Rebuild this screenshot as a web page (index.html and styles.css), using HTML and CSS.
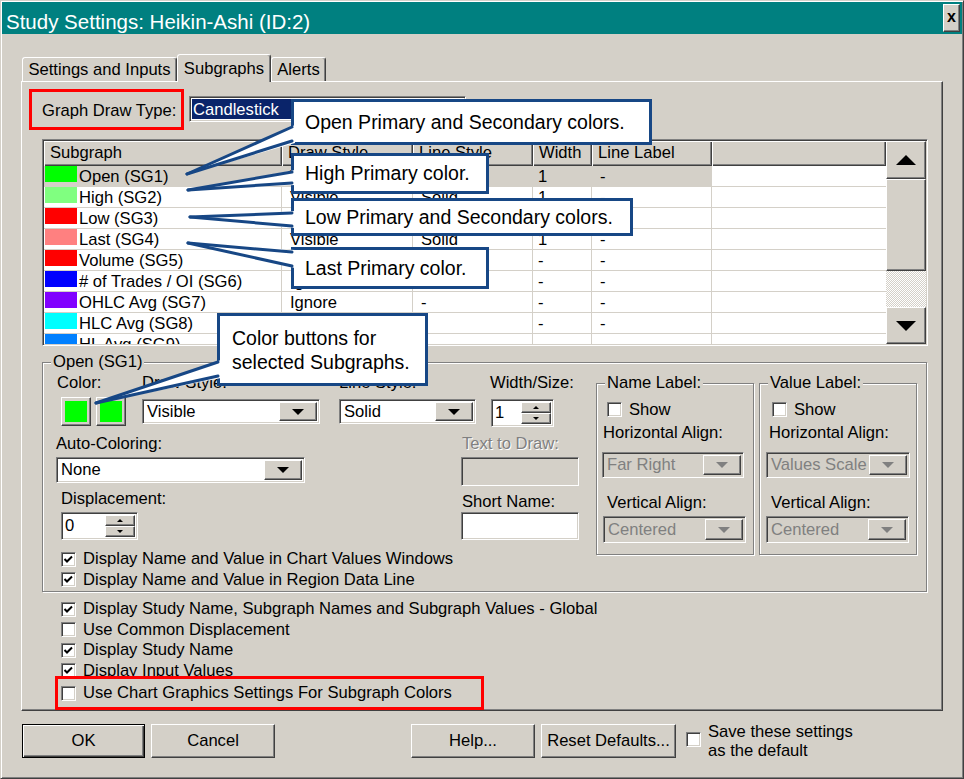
FILE: index.html
```html
<!DOCTYPE html>
<html>
<head>
<meta charset="utf-8">
<title>Study Settings</title>
<link rel="stylesheet" href="styles.css">
</head>
<body>
<div class="window">
  <div class="titlebar">
    <span class="title">Study Settings: Heikin-Ashi (ID:2)</span>
    <span class="close raised">x</span>
  </div>

  <div class="tabs">
    <div class="tab t1">Settings and Inputs</div>
    <div class="tab t2">Subgraphs</div>
    <div class="tab t3">Alerts</div>
  </div>

  <div class="panel">
    <div class="drawtype">
      <div class="gdt">Graph Draw Type:</div>
      <div class="combo sunken gdt-combo"><span class="hl">Candlestick</span><span class="dd raised"><i class="arr"></i></span></div>
    </div>

    <div class="grid sunken">
      <div class="gmain">
        <div class="ghead">
          <div class="hc c1">Subgraph</div>
          <div class="hc c2">Draw Style</div>
          <div class="hc c3">Line Style</div>
          <div class="hc c4">Width</div>
          <div class="hc c5">Line Label</div>
          <div class="hc c6"></div>
        </div>
        <div class="grow sel"><div class="gc c1"><span class="sw sw1"></span>Open (SG1)</div><div class="gc c2">Visible</div><div class="gc c3">Solid</div><div class="gc c4">1</div><div class="gc c5">-</div><div class="gc c6"></div></div>
        <div class="grow"><div class="gc c1"><span class="sw sw2"></span>High (SG2)</div><div class="gc c2">Visible</div><div class="gc c3">Solid</div><div class="gc c4">1</div><div class="gc c5">-</div><div class="gc c6"></div></div>
        <div class="grow"><div class="gc c1"><span class="sw sw3"></span>Low (SG3)</div><div class="gc c2">Visible</div><div class="gc c3">Solid</div><div class="gc c4">1</div><div class="gc c5">-</div><div class="gc c6"></div></div>
        <div class="grow"><div class="gc c1"><span class="sw sw4"></span>Last (SG4)</div><div class="gc c2">Visible</div><div class="gc c3">Solid</div><div class="gc c4">1</div><div class="gc c5">-</div><div class="gc c6"></div></div>
        <div class="grow"><div class="gc c1"><span class="sw sw5"></span>Volume (SG5)</div><div class="gc c2">Ignore</div><div class="gc c3">-</div><div class="gc c4">-</div><div class="gc c5">-</div><div class="gc c6"></div></div>
        <div class="grow"><div class="gc c1"><span class="sw sw6"></span># of Trades / OI (SG6)</div><div class="gc c2">Ignore</div><div class="gc c3">-</div><div class="gc c4">-</div><div class="gc c5">-</div><div class="gc c6"></div></div>
        <div class="grow"><div class="gc c1"><span class="sw sw7"></span>OHLC Avg (SG7)</div><div class="gc c2">Ignore</div><div class="gc c3">-</div><div class="gc c4">-</div><div class="gc c5">-</div><div class="gc c6"></div></div>
        <div class="grow"><div class="gc c1"><span class="sw sw8"></span>HLC Avg (SG8)</div><div class="gc c2">Ignore</div><div class="gc c3">-</div><div class="gc c4">-</div><div class="gc c5">-</div><div class="gc c6"></div></div>
        <div class="grow"><div class="gc c1"><span class="sw sw9"></span>HL Avg (SG9)</div><div class="gc c2">Ignore</div><div class="gc c3">-</div><div class="gc c4">-</div><div class="gc c5">-</div><div class="gc c6"></div></div>
      </div>
      <div class="vscroll">
        <div class="sb-btn sb-up raised"><i class="sarr-up"></i></div>
        <div class="sb-thumb raised"></div>
        <div class="sb-track"></div>
        <div class="sb-btn sb-down raised"><i class="sarr-dn"></i></div>
      </div>
    </div>

    <div class="ogroup">
      <span class="legend">Open (SG1)</span>
      <div class="ocol">
        <div class="rowA">
          <span>Color:</span>
          <span>Draw Style:</span>
          <span>Line Style:</span>
          <span>Width/Size:</span>
        </div>
        <div class="rowB">
          <div class="cbtns">
            <span class="cbtn raised"><span class="cfill"></span></span>
            <span class="cbtn raised"><span class="cfill"></span></span>
          </div>
          <div class="combo sunken w-draw"><span class="val">Visible</span><span class="dd raised"><i class="arr"></i></span></div>
          <div class="combo sunken w-line"><span class="val">Solid</span><span class="dd raised"><i class="arr"></i></span></div>
          <div class="spin sunken w-width"><span class="val">1</span><span class="sbtns"><span class="sb raised"><i class="tup"></i></span><span class="sb raised"><i class="tdn"></i></span></span></div>
        </div>
        <div class="rowC">
          <span>Auto-Coloring:</span>
          <span class="disabled ml1">Text to Draw:</span>
        </div>
        <div class="rowD">
          <div class="combo sunken w-auto"><span class="val">None</span><span class="dd raised"><i class="arr"></i></span></div>
          <div class="edit sunken dis-edit"></div>
        </div>
        <div class="rowE">
          <span class="ml5">Displacement:</span>
          <span class="ml1 mt3">Short Name:</span>
        </div>
        <div class="rowF">
          <div class="spin sunken w-disp"><span class="val">0</span><span class="sbtns"><span class="sb raised"><i class="tup"></i></span><span class="sb raised"><i class="tdn"></i></span></span></div>
          <div class="edit sunken w-short"></div>
        </div>
        <div class="ochecks">
          <div class="chk-row"><span class="chk sunken"><svg viewBox="0 0 13 13" width="13" height="13"><path d="M2.5 6 L5 8.5 L10 3.5" fill="none" stroke="#000" stroke-width="2"/></svg></span><span class="lbl">Display Name and Value in Chart Values Windows</span></div>
          <div class="chk-row"><span class="chk sunken"><svg viewBox="0 0 13 13" width="13" height="13"><path d="M2.5 6 L5 8.5 L10 3.5" fill="none" stroke="#000" stroke-width="2"/></svg></span><span class="lbl">Display Name and Value in Region Data Line</span></div>
        </div>
      </div>

      <div class="lgroup lg-name">
        <span class="legend">Name Label:</span>
        <div class="show-row"><span class="chk sunken"></span><span class="lbl">Show</span></div>
        <div class="lg-label lh">Horizontal Align:</div>
        <div class="combo sunken lg-combo disabled-combo"><span class="val">Far Right</span><span class="dd raised"><i class="arr dis"></i></span></div>
        <div class="lg-label lv">Vertical Align:</div>
        <div class="combo sunken lg-combo lg-combo2 disabled-combo"><span class="val">Centered</span><span class="dd raised"><i class="arr dis"></i></span></div>
      </div>

      <div class="lgroup lg-value">
        <span class="legend">Value Label:</span>
        <div class="show-row"><span class="chk sunken"></span><span class="lbl">Show</span></div>
        <div class="lg-label lh">Horizontal Align:</div>
        <div class="combo sunken lg-combo disabled-combo"><span class="val">Values Scale</span><span class="dd raised"><i class="arr dis"></i></span></div>
        <div class="lg-label lv">Vertical Align:</div>
        <div class="combo sunken lg-combo lg-combo2 disabled-combo"><span class="val">Centered</span><span class="dd raised"><i class="arr dis"></i></span></div>
      </div>
    </div>

    <div class="gchecks">
      <div class="chk-row"><span class="chk sunken"><svg viewBox="0 0 13 13" width="13" height="13"><path d="M2.5 6 L5 8.5 L10 3.5" fill="none" stroke="#000" stroke-width="2"/></svg></span><span class="lbl">Display Study Name, Subgraph Names and Subgraph Values - Global</span></div>
      <div class="chk-row"><span class="chk sunken"></span><span class="lbl">Use Common Displacement</span></div>
      <div class="chk-row"><span class="chk sunken"><svg viewBox="0 0 13 13" width="13" height="13"><path d="M2.5 6 L5 8.5 L10 3.5" fill="none" stroke="#000" stroke-width="2"/></svg></span><span class="lbl">Display Study Name</span></div>
      <div class="chk-row"><span class="chk sunken"><svg viewBox="0 0 13 13" width="13" height="13"><path d="M2.5 6 L5 8.5 L10 3.5" fill="none" stroke="#000" stroke-width="2"/></svg></span><span class="lbl">Display Input Values</span></div>
    </div>
    <div class="redrow">
      <span class="chk sunken"></span><span class="lbl">Use Chart Graphics Settings For Subgraph Colors</span>
    </div>
  </div>

  <div class="btnrow">
    <div class="btn ok">OK</div>
    <div class="btn raised cancel">Cancel</div>
    <div class="btn raised help">Help...</div>
    <div class="btn raised reset">Reset Defaults...</div>
    <span class="chk sunken save-chk"></span>
    <span class="save-lbl">Save these settings<br>as the default</span>
  </div>
</div>

<div class="callouts">
  <div class="co co1">Open Primary and Secondary colors.</div>
  <div class="co co2">High Primary color.</div>
  <div class="co co3">Low Primary and Secondary colors.</div>
  <div class="co co4">Last Primary color.</div>
  <div class="co co5">Color buttons for<br>selected Subgraphs.</div>
  <svg class="wedges" width="964" height="779" viewBox="0 0 964 779">
    <g fill="#fff" stroke="none">
      <polygon points="187,174 295,125 295,143"/>
      <polygon points="188,190 295,170 295,185"/>
      <polygon points="190,217 295,211 295,228"/>
      <polygon points="188,243 295,250 295,268"/>
      <polygon points="96,403 221,360 221,378"/>
    </g>
    <g stroke="#174785" stroke-width="3" fill="none" stroke-linecap="round">
      <line x1="187" y1="174" x2="292" y2="127"/>
      <line x1="187" y1="174" x2="292" y2="141"/>
      <line x1="188" y1="190" x2="292" y2="172"/>
      <line x1="188" y1="190" x2="292" y2="183"/>
      <line x1="190" y1="217" x2="292" y2="213"/>
      <line x1="190" y1="217" x2="292" y2="226"/>
      <line x1="188" y1="243" x2="292" y2="252"/>
      <line x1="188" y1="243" x2="292" y2="266"/>
      <line x1="96" y1="403" x2="218" y2="362"/>
      <line x1="96" y1="403" x2="218" y2="376"/>
    </g>
  </svg>
</div>
</body>
</html>
```

FILE: styles.css
```css
* { box-sizing: border-box; margin: 0; padding: 0; }
html, body { width: 964px; height: 779px; overflow: hidden; }
body {
  position: relative;
  background: #d4d0c8;
  font-family: "Liberation Sans", Arial, sans-serif;
  font-size: 16.6px;
  color: #000;
}

/* 3D helpers */
.raised {
  background: #d4d0c8;
  border: 1px solid;
  border-color: #fff #404040 #404040 #fff;
  box-shadow: inset -1px -1px #808080;
}
.sunken {
  background: #fff;
  border: 1px solid;
  border-color: #808080 #fff #fff #808080;
  box-shadow: inset 1px 1px #404040, inset -1px -1px #d4d0c8;
}

/* window */
.window {
  width: 964px;
  height: 779px;
  border: 1px solid;
  border-color: #d4d0c8 #404040 #404040 #d4d0c8;
  padding: 1px;
  background: #d4d0c8;
  box-shadow: inset 1px 1px #fff, inset -1px -1px #808080;
}
.titlebar {
  height: 32px;
  background: #008080;
  display: flex;
  justify-content: space-between;
  align-items: flex-start;
}
.title {
  color: #fff;
  font-size: 20.5px;
  line-height: 24px;
  margin: 8px 0 0 4px;
  white-space: nowrap;
}
.close {
  width: 17px;
  height: 28px;
  margin: 2px 2px 0 0;
  display: flex;
  align-items: center;
  justify-content: center;
  font-weight: bold;
  font-size: 16px;
  line-height: 16px;
  padding-bottom: 2px;
}

/* tabs */
.tabs {
  display: flex;
  align-items: flex-end;
  height: 28px;
  margin: 19px 0 0 20px;
}
.tab {
  height: 24px;
  display: flex;
  align-items: center;
  justify-content: center;
  background: #d4d0c8;
  border: 1px solid;
  border-bottom: none;
  border-color: #fff #404040 transparent #fff;
  box-shadow: inset -1px 0 #808080;
  border-radius: 3px 3px 0 0;
  white-space: nowrap;
  padding-top: 1px;
}
.t1 { width: 155px; }
.t2 {
  width: 94px;
  height: 28px;
  margin-bottom: -1px;
  position: relative;
  z-index: 1;
  padding-top: 0;
}
.t3 { width: 55px; }

/* panel */
.panel {
  margin-left: 19px;
  width: 922px;
  border: 1px solid;
  border-color: #fff #404040 #404040 #fff;
  box-shadow: inset -1px -1px #808080;
}
.drawtype {
  display: flex;
  align-items: flex-start;
  margin: 7px 0 0 7px;
}
.gdt {
  width: 155px;
  height: 41px;
  border: 3px solid #f00;
  padding: 3px 0 0 10px;
  display: flex;
  align-items: center;
  white-space: nowrap;
}
.gdt-combo {
  margin: 7px 0 0 5px;
  width: 277px;
  height: 26px;
  display: flex;
  padding: 2px;
}
.hl {
  flex: 1;
  background: #0a246a;
  color: #fff;
  padding: 1px 0 0 1px;
  display: flex;
  align-items: center;
}

/* combos */
.combo {
  display: flex;
  padding: 2px;
  align-items: stretch;
}
.combo .val {
  flex: 1;
  padding-left: 2px;
  display: flex;
  align-items: center;
  white-space: nowrap;
  overflow: hidden;
}
.dd {
  width: 38px;
  flex: none;
  display: flex;
  align-items: center;
  justify-content: center;
}
.gdt-combo .dd { width: 20px; }
.arr {
  display: block;
  width: 0;
  height: 0;
  border-left: 6px solid transparent;
  border-right: 6px solid transparent;
  border-top: 6px solid #000;
}
.arr.dis { border-top-color: #808080; }
.disabled-combo { background: #d4d0c8; color: #808080; }

/* grid */
.grid {
  margin: 9px 0 0 20px;
  width: 886px;
  height: 207px;
  padding: 1px;
  display: flex;
}
.gmain {
  width: 842px;
  overflow: hidden;
  background: #fff;
}
.ghead {
  display: flex;
  height: 25px;
  background: #d4d0c8;
}
.hc {
  height: 25px;
  line-height: 24px;
  padding-left: 6px;
  white-space: nowrap;
  box-shadow: inset 1px 1px #fff, inset -1px -1px #404040, inset -2px -2px #808080;
}
.c1 { width: 238px; flex: none; }
.c2 { width: 131px; flex: none; }
.c3 { width: 120px; flex: none; }
.c4 { width: 59px; flex: none; }
.c5 { width: 120px; flex: none; }
.c6 { width: 174px; flex: none; }
.grow {
  display: flex;
  height: 21px;
  border-bottom: 1px solid #d4d0c8;
  background: #fff;
}
.gc {
  height: 20px;
  line-height: 21px;
  padding-left: 8px;
  border-right: 1px solid #d4d0c8;
  white-space: nowrap;
  overflow: hidden;
}
.gc.c4 { padding-left: 5px; }
.gc.c6 { border-right: none; }
.gc.c1 {
  padding-left: 1px;
  display: flex;
  align-items: flex-start;
}
.grow.sel .gc:not(.c6) { background: #d4d0c8; }
.sw {
  width: 32px;
  height: 16px;
  margin-right: 2px;
  flex: none;
}
.sw1 { background: #00ff00; }
.sw2 { background: #80ff80; }
.sw3 { background: #ff0000; }
.sw4 { background: #ff8080; }
.sw5 { background: #ff0000; }
.sw6 { background: #0000ff; }
.sw7 { background: #8000ff; }
.sw8 { background: #00ffff; }
.sw9 { background: #0080ff; }

.vscroll {
  width: 40px;
  display: flex;
  flex-direction: column;
}
.sb-btn {
  display: flex;
  align-items: center;
  justify-content: center;
}
.sb-up { height: 38px; }
.sb-down { height: 37px; }
.sb-thumb { height: 92px; }
.sb-track {
  height: 36px;
  background: repeating-conic-gradient(#fff 0 25%, #d4d0c8 0 50%) 0 0 / 2px 2px;
}
.sarr-up {
  display: block;
  width: 0; height: 0;
  border-left: 10px solid transparent;
  border-right: 10px solid transparent;
  border-bottom: 10px solid #000;
}
.sarr-dn {
  display: block;
  width: 0; height: 0;
  border-left: 10px solid transparent;
  border-right: 10px solid transparent;
  border-top: 10px solid #000;
}

/* Open group */
.ogroup {
  position: relative;
  margin: 16px 0 0 20px;
  width: 885px;
  height: 230px;
  border: 1px solid #808080;
  box-shadow: inset 1px 1px #fff, 1px 1px #fff;
  display: flex;
  align-items: flex-start;
  padding-top: 11px;
}
.legend {
  position: absolute;
  top: -10px;
  left: 8px;
  padding: 0 2px;
  line-height: 18px;
  background: #d4d0c8;
  white-space: nowrap;
}
.ocol { width: 553px; flex: none; }
.rowA, .rowB {
  display: grid;
  grid-template-columns: 85px 197px 151px 100px;
  padding-left: 14px;
}
.rowA { height: 18px; line-height: 18px; white-space: nowrap; }
.rowB { margin-top: 5px; height: 30px; align-items: start; }
.cbtns { display: flex; gap: 5px; margin-left: 4px; }
.cbtn {
  width: 30px;
  height: 29px;
  padding: 3px;
  display: flex;
}
.cfill { flex: 1; background: #00ff00; }
.w-draw { width: 178px; height: 25px; margin-top: 2px; }
.w-line { width: 137px; height: 25px; margin-top: 2px; }
.spin { display: flex; padding: 2px; }
.spin .val { flex: 1; padding-left: 1px; display: flex; align-items: center; }
.sbtns { width: 30px; display: flex; flex-direction: column; flex: none; }
.sb { flex: 1; display: flex; align-items: center; justify-content: center; }
.tup {
  display: block; width: 0; height: 0;
  border-left: 3px solid transparent;
  border-right: 3px solid transparent;
  border-bottom: 3px solid #000;
}
.tdn {
  display: block; width: 0; height: 0;
  border-left: 3px solid transparent;
  border-right: 3px solid transparent;
  border-top: 3px solid #000;
}
.w-width { width: 63px; height: 28px; margin: 2px 0 0 1px; }
.rowC, .rowD, .rowE, .rowF {
  display: grid;
  grid-template-columns: 405px 130px;
  padding-left: 13px;
  align-items: start;
}
.rowC { margin-top: 8px; height: 18px; line-height: 18px; white-space: nowrap; }
.rowD { margin-top: 4px; height: 29px; }
.rowE { margin-top: 4px; height: 21px; line-height: 18px; white-space: nowrap; }
.rowF { margin-top: 1px; height: 28px; }
.ml1 { margin-left: 1px; }
.ml5 { margin-left: 5px; }
.mt3 { margin-top: 3px; }
.disabled { color: #808080; text-shadow: 1px 1px #fff; }
.w-auto { width: 249px; height: 26px; }
.edit { height: 28px; }
.dis-edit { width: 118px; height: 29px; background: #d4d0c8; }
.w-short { width: 118px; }
.w-disp { width: 77px; height: 28px; margin-left: 5px; }

.ochecks { margin: 9px 0 0 18px; }
.chk-row {
  height: 20.5px;
  display: flex;
  align-items: center;
  white-space: nowrap;
}
.chk {
  width: 15px;
  height: 15px;
  flex: none;
  display: flex;
  align-items: center;
  justify-content: center;
}
.chk svg { display: block; }
.lbl { margin-left: 7px; white-space: nowrap; }

/* label groups */
.lgroup {
  position: relative;
  width: 158px;
  height: 172px;
  margin-top: 9px;
  border: 1px solid #808080;
  box-shadow: inset 1px 1px #fff, 1px 1px #fff;
  flex: none;
}
.lg-value { margin-left: 5px; }
.show-row {
  margin-top: 18px;
  padding-left: 10px;
  height: 15px;
  display: flex;
  align-items: center;
}
.lg-value .show-row { padding-left: 12px; }
.lg-label { height: 18px; line-height: 18px; white-space: nowrap; }
.lh { margin-top: 7px; padding-left: 6px; }
.lv { margin-top: 16px; padding-left: 10px; }
.lg-value .lh { padding-left: 9px; }
.lg-value .lv { padding-left: 11px; }
.lg-combo { width: 142px; height: 26px; margin: 10px 0 0 5px; }
.lg-combo2 { width: 143px; height: 27px; margin: 4px 0 0 6px; }
.lg-value .lg-combo { width: 144px; margin-left: 6px; }
.lg-value .lg-combo2 { width: 143px; }

/* global checks */
.gchecks { margin: 7px 0 0 39px; }
.redrow {
  position: relative;
  z-index: 1;
  margin: -5px 0 0 33px;
  width: 429px;
  height: 34px;
  border: 3px solid #f00;
  background: #d4d0c8;
  display: flex;
  align-items: center;
  padding-left: 3px;
}

/* bottom buttons */
.btnrow {
  display: flex;
  align-items: center;
  margin: 13px 0 0 20px;
  height: 34px;
}
.btn {
  height: 34px;
  display: flex;
  align-items: center;
  justify-content: center;
  white-space: nowrap;
}
.ok {
  width: 123px;
  background: #d4d0c8;
  border: 1px solid #000;
  box-shadow: inset 1px 1px #fff, inset -1px -1px #404040, inset -2px -2px #808080;
}
.cancel { width: 124px; margin-left: 6px; }
.help { width: 124px; margin-left: 136px; }
.reset { width: 135px; margin-left: 6px; }
.save-chk { margin: -3px 0 0 10px; }
.save-lbl { margin-left: 7px; line-height: 19.5px; white-space: nowrap; }

/* callouts overlay */
.callouts {
  position: absolute;
  left: 0;
  top: 0;
  width: 964px;
  height: 779px;
  pointer-events: none;
}
.co {
  position: absolute;
  background: #fff;
  border: 3px solid #174785;
  font-size: 19.5px;
  padding-left: 11px;
  display: flex;
  align-items: center;
  white-space: nowrap;
}
.co1 { left: 291px; top: 99px; width: 361px; height: 46px; }
.co2 { left: 291px; top: 153px; width: 198px; height: 41px; }
.co3 { left: 291px; top: 198px; width: 342px; height: 38px; }
.co4 { left: 291px; top: 247px; width: 198px; height: 42px; }
.co5 { left: 217px; top: 313px; width: 211px; height: 73px; padding-left: 12px; line-height: 24px; }
.wedges { position: absolute; left: 0; top: 0; }
```
